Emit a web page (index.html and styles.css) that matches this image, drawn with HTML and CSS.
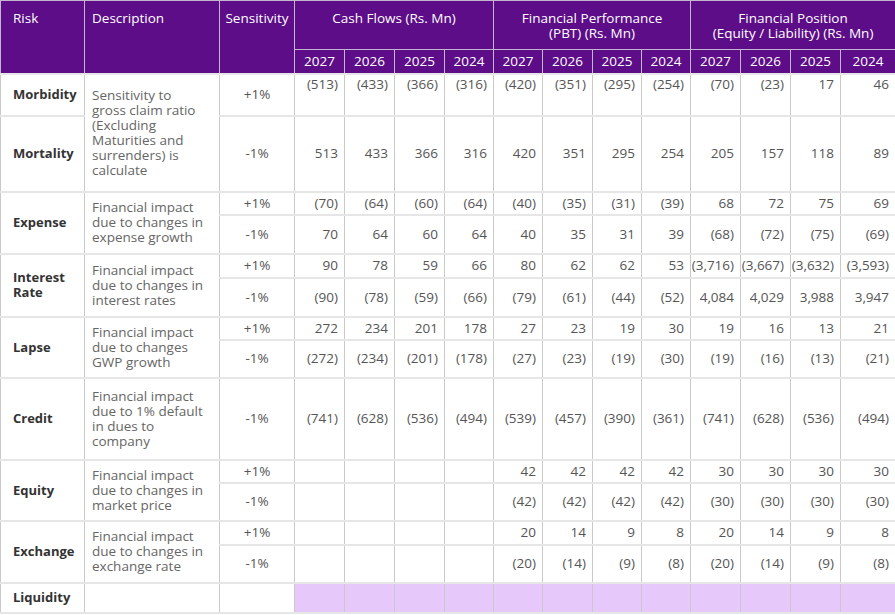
FILE: index.html
```html
<!DOCTYPE html>
<html>
<head>
<meta charset="utf-8">
<link rel="stylesheet" href="styles.css">
</head>
<body>
<table class="sens">
<colgroup>
<col class="c-risk"><col class="c-desc"><col class="c-sens">
<col class="c-n"><col class="c-n"><col class="c-n"><col class="c-n49">
<col class="c-n49"><col class="c-n"><col class="c-n49"><col class="c-n49">
<col class="c-n"><col class="c-n"><col class="c-n"><col class="c-last">
</colgroup>
<thead>
<tr class="h1">
<th rowspan="2" class="hl">Risk</th>
<th rowspan="2" class="hl">Description</th>
<th rowspan="2" class="hc">Sensitivity</th>
<th colspan="4" class="hc">Cash Flows (Rs. Mn)</th>
<th colspan="4" class="hc">Financial Performance<br>(PBT) (Rs. Mn)</th>
<th colspan="4" class="hc">Financial Position<br>(Equity / Liability) (Rs. Mn)</th>
</tr>
<tr class="h2">
<th class="yr">2027</th><th class="yr">2026</th><th class="yr">2025</th><th class="yr">2024</th>
<th class="yr">2027</th><th class="yr">2026</th><th class="yr">2025</th><th class="yr">2024</th>
<th class="yr">2027</th><th class="yr">2026</th><th class="yr">2025</th><th class="yr">2024</th>
</tr>
</thead>
<tbody>
<tr class="r42">
<td class="risk">Morbidity</td>
<td rowspan="2" class="desc">Sensitivity to<br>gross claim ratio<br>(Excluding<br>Maturities and<br>surrenders) is<br>calculate</td>
<td class="pct">+1%</td>
<td class="num top">(513)</td><td class="num top">(433)</td><td class="num top">(366)</td><td class="num top">(316)</td>
<td class="num top">(420)</td><td class="num top">(351)</td><td class="num top">(295)</td><td class="num top">(254)</td>
<td class="num top">(70)</td><td class="num top">(23)</td><td class="num top">17</td><td class="num top">46</td>
</tr>
<tr class="r76">
<td class="risk">Mortality</td>
<td class="pct">-1%</td>
<td class="num">513</td><td class="num">433</td><td class="num">366</td><td class="num">316</td>
<td class="num">420</td><td class="num">351</td><td class="num">295</td><td class="num">254</td>
<td class="num">205</td><td class="num">157</td><td class="num">118</td><td class="num">89</td>
</tr>
<tr class="r23">
<td rowspan="2" class="risk">Expense</td>
<td rowspan="2" class="desc">Financial impact<br>due to changes in<br>expense growth</td>
<td class="pct">+1%</td>
<td class="num">(70)</td><td class="num">(64)</td><td class="num">(60)</td><td class="num">(64)</td>
<td class="num">(40)</td><td class="num">(35)</td><td class="num">(31)</td><td class="num">(39)</td>
<td class="num">68</td><td class="num">72</td><td class="num">75</td><td class="num">69</td>
</tr>
<tr class="r39">
<td class="pct">-1%</td>
<td class="num">70</td><td class="num">64</td><td class="num">60</td><td class="num">64</td>
<td class="num">40</td><td class="num">35</td><td class="num">31</td><td class="num">39</td>
<td class="num">(68)</td><td class="num">(72)</td><td class="num">(75)</td><td class="num">(69)</td>
</tr>
<tr class="r24">
<td rowspan="2" class="risk">Interest<br>Rate</td>
<td rowspan="2" class="desc">Financial impact<br>due to changes in<br>interest rates</td>
<td class="pct">+1%</td>
<td class="num">90</td><td class="num">78</td><td class="num">59</td><td class="num">66</td>
<td class="num">80</td><td class="num">62</td><td class="num">62</td><td class="num">53</td>
<td class="num">(3,716)</td><td class="num">(3,667)</td><td class="num">(3,632)</td><td class="num">(3,593)</td>
</tr>
<tr class="r39">
<td class="pct">-1%</td>
<td class="num">(90)</td><td class="num">(78)</td><td class="num">(59)</td><td class="num">(66)</td>
<td class="num">(79)</td><td class="num">(61)</td><td class="num">(44)</td><td class="num">(52)</td>
<td class="num">4,084</td><td class="num">4,029</td><td class="num">3,988</td><td class="num">3,947</td>
</tr>
<tr class="r23">
<td rowspan="2" class="risk">Lapse</td>
<td rowspan="2" class="desc">Financial impact<br>due to changes<br>GWP growth</td>
<td class="pct">+1%</td>
<td class="num">272</td><td class="num">234</td><td class="num">201</td><td class="num">178</td>
<td class="num">27</td><td class="num">23</td><td class="num">19</td><td class="num">30</td>
<td class="num">19</td><td class="num">16</td><td class="num">13</td><td class="num">21</td>
</tr>
<tr class="r38">
<td class="pct">-1%</td>
<td class="num">(272)</td><td class="num">(234)</td><td class="num">(201)</td><td class="num">(178)</td>
<td class="num">(27)</td><td class="num">(23)</td><td class="num">(19)</td><td class="num">(30)</td>
<td class="num">(19)</td><td class="num">(16)</td><td class="num">(13)</td><td class="num">(21)</td>
</tr>
<tr class="r82">
<td class="risk">Credit</td>
<td class="desc">Financial impact<br>due to 1% default<br>in dues to<br>company</td>
<td class="pct">-1%</td>
<td class="num">(741)</td><td class="num">(628)</td><td class="num">(536)</td><td class="num">(494)</td>
<td class="num">(539)</td><td class="num">(457)</td><td class="num">(390)</td><td class="num">(361)</td>
<td class="num">(741)</td><td class="num">(628)</td><td class="num">(536)</td><td class="num">(494)</td>
</tr>
<tr class="r23">
<td rowspan="2" class="risk">Equity</td>
<td rowspan="2" class="desc">Financial impact<br>due to changes in<br>market price</td>
<td class="pct">+1%</td>
<td class="num"></td><td class="num"></td><td class="num"></td><td class="num"></td>
<td class="num">42</td><td class="num">42</td><td class="num">42</td><td class="num">42</td>
<td class="num">30</td><td class="num">30</td><td class="num">30</td><td class="num">30</td>
</tr>
<tr class="r38">
<td class="pct">-1%</td>
<td class="num"></td><td class="num"></td><td class="num"></td><td class="num"></td>
<td class="num">(42)</td><td class="num">(42)</td><td class="num">(42)</td><td class="num">(42)</td>
<td class="num">(30)</td><td class="num">(30)</td><td class="num">(30)</td><td class="num">(30)</td>
</tr>
<tr class="r24">
<td rowspan="2" class="risk">Exchange</td>
<td rowspan="2" class="desc">Financial impact<br>due to changes in<br>exchange rate</td>
<td class="pct">+1%</td>
<td class="num"></td><td class="num"></td><td class="num"></td><td class="num"></td>
<td class="num">20</td><td class="num">14</td><td class="num">9</td><td class="num">8</td>
<td class="num">20</td><td class="num">14</td><td class="num">9</td><td class="num">8</td>
</tr>
<tr class="r38">
<td class="pct">-1%</td>
<td class="num"></td><td class="num"></td><td class="num"></td><td class="num"></td>
<td class="num">(20)</td><td class="num">(14)</td><td class="num">(9)</td><td class="num">(8)</td>
<td class="num">(20)</td><td class="num">(14)</td><td class="num">(9)</td><td class="num">(8)</td>
</tr>
<tr class="r30">
<td class="risk">Liquidity</td>
<td class="desc"></td>
<td class="pct"></td>
<td class="liq"></td><td class="liq"></td><td class="liq"></td><td class="liq"></td>
<td class="liq"></td><td class="liq"></td><td class="liq"></td><td class="liq"></td>
<td class="liq"></td><td class="liq"></td><td class="liq"></td><td class="liq"></td>
</tr>
</tbody>
</table>
</body>
</html>
```

FILE: styles.css
```css
html, body {
  margin: 0;
  padding: 0;
  background: #ffffff;
}

.sens {
  width: 895px;
  table-layout: fixed;
  border-collapse: collapse;
  font-family: "Open Sans", "Noto Sans", sans-serif;
  font-size: 13.5px;
  color: #555555;
  border: 1px solid #cfcfcf;
}

.c-risk { width: 84px; }
.c-desc { width: 135px; }
.c-sens { width: 75px; }
.c-n { width: 50px; }
.c-n49 { width: 49px; }
.c-last { width: 55px; }

.sens th {
  background: #5c0d87;
  color: #ffffff;
  font-weight: 400;
  font-size: 13.5px;
  line-height: 15px;
  border: 1px solid #c4b6cf;
  padding: 0;
}

.h1 { height: 49px; }
.h2 { height: 24px; }

.hl {
  text-align: left;
  vertical-align: top;
  padding: 10px 0 0 7px !important;
}

.sens th.hl:first-child { padding-left: 12px !important; }

.hc {
  text-align: center;
  vertical-align: top;
  padding-top: 10px !important;
}

.yr {
  text-align: center;
  vertical-align: middle;
}

.sens td {
  border-top: 2px solid #e6e6e6;
  border-bottom: 2px solid #e6e6e6;
  border-left: 1px solid #cacaca;
  border-right: 1px solid #cacaca;
  padding: 0;
  line-height: 15px;
}

.risk {
  font-weight: 700;
  font-size: 13px;
  color: #333333;
  padding-left: 12px !important;
  vertical-align: middle;
}

.desc {
  padding-left: 7px !important;
  vertical-align: middle;
  color: #666666;
}

.pct {
  text-align: center;
  vertical-align: middle;
}

.num {
  text-align: right;
  padding-right: 6px !important;
  vertical-align: middle;
  white-space: nowrap;
}

.num.top {
  vertical-align: top;
  padding-top: 2px !important;
}

.liq { background: #e7c8fb; }

.r23 { height: 23px; }
.r24 { height: 24px; }
.r30 { height: 30px; }
.r38 { height: 38px; }
.r39 { height: 39px; }
.r42 { height: 42px; }
.r76 { height: 76px; }
.r82 { height: 82px; }
```
